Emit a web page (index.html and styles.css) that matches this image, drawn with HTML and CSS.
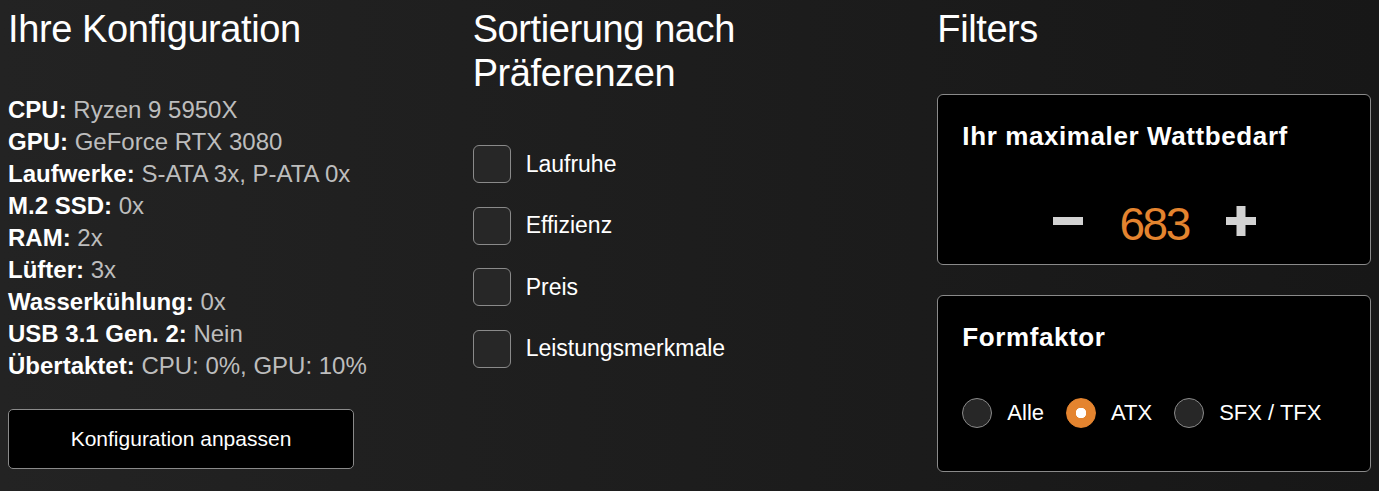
FILE: index.html
```html
<!DOCTYPE html>
<html lang="de">

<head>
    <meta charset="utf-8">
    <meta name="viewport" content="width=device-width, initial-scale=1">
    <title>Netzteil-Konfigurator</title>
    <link rel="stylesheet" href="styles.css">
</head>

<body>
    <div class="page">
        <section class="column">
            <h2 class="column-title">Ihre Konfiguration</h2>
            <ul class="config-list">
                <li><b>CPU:</b> <span>Ryzen 9 5950X</span></li>
                <li><b>GPU:</b> <span>GeForce RTX 3080</span></li>
                <li><b>Laufwerke:</b> <span>S-ATA 3x, P-ATA 0x</span></li>
                <li><b>M.2 SSD:</b> <span>0x</span></li>
                <li><b>RAM:</b> <span>2x</span></li>
                <li><b>Lüfter:</b> <span>3x</span></li>
                <li><b>Wasserkühlung:</b> <span>0x</span></li>
                <li><b>USB 3.1 Gen. 2:</b> <span>Nein</span></li>
                <li><b>Übertaktet:</b> <span>CPU: 0%, GPU: 10%</span></li>
            </ul>
            <button class="edit-btn">Konfiguration anpassen</button>
        </section>

        <section class="column">
            <h2 class="column-title">Sortierung nach Präferenzen</h2>
            <div class="sort-list">
                <label class="check-row"><input type="checkbox" class="check-box"> Laufruhe</label>
                <label class="check-row"><input type="checkbox" class="check-box"> Effizienz</label>
                <label class="check-row"><input type="checkbox" class="check-box"> Preis</label>
                <label class="check-row"><input type="checkbox" class="check-box"> Leistungsmerkmale</label>
            </div>
        </section>

        <section class="column">
            <h2 class="column-title">Filters</h2>
            <div class="filter-card">
                <h3 class="card-title">Ihr maximaler Wattbedarf</h3>
                <div class="counter">
                    <button class="counter-btn" aria-label="Weniger">
                        <svg width="30" height="30" viewBox="0 0 30 30"><rect x="0" y="11" width="30" height="8" fill="currentColor"/></svg>
                    </button>
                    <span class="counter-value">683</span>
                    <button class="counter-btn" aria-label="Mehr">
                        <svg width="30" height="30" viewBox="0 0 30 30"><rect x="0" y="11" width="30" height="8" fill="currentColor"/><rect x="10.5" y="0" width="9" height="30" fill="currentColor"/></svg>
                    </button>
                </div>
            </div>
            <div class="filter-card">
                <h3 class="card-title">Formfaktor</h3>
                <div class="radio-group">
                    <label class="radio-row"><input type="radio" name="form" class="radio-dot"> Alle</label>
                    <label class="radio-row"><input type="radio" name="form" class="radio-dot" checked> ATX</label>
                    <label class="radio-row"><input type="radio" name="form" class="radio-dot"> SFX / TFX</label>
                </div>
            </div>
        </section>
    </div>
</body>

</html>
```

FILE: styles.css
```css
:root {
    --color-text: #ffffff;
    --color-muted: #bdbdbd;
    --color-border: #8a8a8a;
    --color-box: #272727;
    --color-accent: #e4842f;
    --color-icon: #d2d2d2;
}

body {
    margin: 0;
    min-height: 491px;
    font-family: "Liberation Sans", Arial, sans-serif;
    color: var(--color-text);
    background: linear-gradient(to right, #232323, #171717);
}

.page {
    display: grid;
    grid-template-columns: repeat(3, 1fr);
    gap: 31px;
    padding: 7px 8px 0;
}

.column-title {
    margin: 0 0 43px;
    font-size: 38px;
    line-height: 44px;
    font-weight: 400;
    letter-spacing: -0.4px;
}

.config-list {
    list-style: none;
    margin: 0;
    padding: 0;
    font-size: 24px;
    line-height: 32px;
}

.config-list span {
    color: var(--color-muted);
}

.edit-btn {
    display: block;
    width: 346px;
    height: 60px;
    margin-top: 27px;
    background: #000;
    color: var(--color-text);
    border: 1px solid var(--color-border);
    border-radius: 5px;
    font-family: inherit;
    font-size: 21px;
    cursor: pointer;
}

.sort-list {
    display: flex;
    flex-direction: column;
    gap: 23.5px;
    padding-top: 7px;
}

.check-row {
    display: flex;
    align-items: center;
    gap: 15px;
    font-size: 23px;
    cursor: pointer;
}

.check-box {
    appearance: none;
    width: 38px;
    height: 38px;
    margin: 0;
    background: var(--color-box);
    border: 1.5px solid var(--color-border);
    border-radius: 6px;
    cursor: pointer;
}

.filter-card {
    background: #000;
    border: 1px solid var(--color-border);
    border-radius: 6px;
    padding: 26px 24px 18px;
}

.filter-card + .filter-card {
    margin-top: 30px;
}

.card-title {
    margin: 0;
    font-size: 26px;
    line-height: 31px;
    font-weight: 700;
    letter-spacing: 0.6px;
}

.counter {
    display: flex;
    align-items: center;
    justify-content: center;
    gap: 37px;
    height: 50px;
    margin-top: 44px;
}

.counter-btn {
    display: flex;
    padding: 0;
    background: none;
    border: none;
    color: var(--color-icon);
    cursor: pointer;
}

.counter-value {
    font-size: 46px;
    letter-spacing: -2.5px;
    color: var(--color-accent);
    margin-top: 6px;
}

.radio-group {
    display: flex;
    align-items: center;
    gap: 22px;
    margin: 45px 0 25px;
}

.radio-row {
    display: flex;
    align-items: center;
    gap: 15px;
    font-size: 22px;
    cursor: pointer;
}

.radio-dot {
    appearance: none;
    width: 30px;
    height: 30px;
    margin: 0;
    background: var(--color-box);
    border: 1.5px solid var(--color-border);
    border-radius: 50%;
    cursor: pointer;
}

.radio-dot:checked {
    border-color: var(--color-accent);
    background: radial-gradient(circle, #ffffff 0 5px, var(--color-accent) 5.5px);
}
```
